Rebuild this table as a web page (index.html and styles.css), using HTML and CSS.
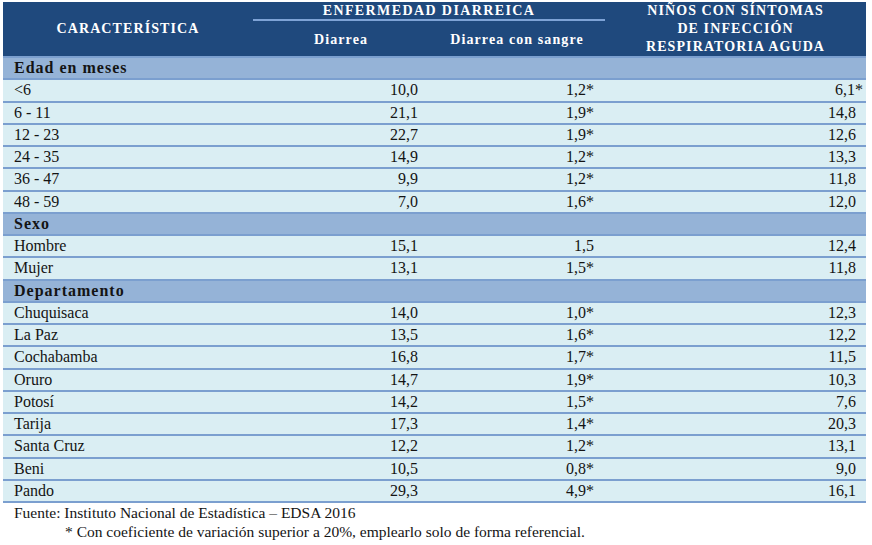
FILE: index.html
```html
<!DOCTYPE html>
<html lang="es">
<head>
<meta charset="utf-8">
<title>Tabla</title>
<link rel="stylesheet" href="styles.css">
</head>
<body>
<div class="page">
  <table class="data">
    <colgroup>
      <col class="c1"><col class="c2"><col class="c3"><col class="c4">
    </colgroup>
    <thead>
      <tr class="h1">
        <th rowspan="2" class="hc">CARACTERÍSTICA</th>
        <th colspan="2" class="hgroup">ENFERMEDAD DIARREICA</th>
        <th rowspan="2" class="hc hninos">NIÑOS CON SÍNTOMAS<br>DE INFECCIÓN<br>RESPIRATORIA AGUDA</th>
      </tr>
      <tr class="h2">
        <th class="hsub">Diarrea</th>
        <th class="hsub">Diarrea con sangre</th>
      </tr>
    </thead>
    <tbody>
      <tr class="sec"><td>Edad en meses</td><td></td><td></td><td></td></tr>
      <tr><td>&lt;6</td><td>10,0</td><td>1,2*</td><td>6,1<span class="out">*</span></td></tr>
      <tr><td>6 - 11</td><td>21,1</td><td>1,9*</td><td>14,8</td></tr>
      <tr><td>12 - 23</td><td>22,7</td><td>1,9*</td><td>12,6</td></tr>
      <tr><td>24 - 35</td><td>14,9</td><td>1,2*</td><td>13,3</td></tr>
      <tr><td>36 - 47</td><td>9,9</td><td>1,2*</td><td>11,8</td></tr>
      <tr><td>48 - 59</td><td>7,0</td><td>1,6*</td><td>12,0</td></tr>
      <tr class="sec"><td>Sexo</td><td></td><td></td><td></td></tr>
      <tr><td>Hombre</td><td>15,1</td><td>1,5</td><td>12,4</td></tr>
      <tr><td>Mujer</td><td>13,1</td><td>1,5*</td><td>11,8</td></tr>
      <tr class="sec"><td>Departamento</td><td></td><td></td><td></td></tr>
      <tr><td>Chuquisaca</td><td>14,0</td><td>1,0*</td><td>12,3</td></tr>
      <tr><td>La Paz</td><td>13,5</td><td>1,6*</td><td>12,2</td></tr>
      <tr><td>Cochabamba</td><td>16,8</td><td>1,7*</td><td>11,5</td></tr>
      <tr><td>Oruro</td><td>14,7</td><td>1,9*</td><td>10,3</td></tr>
      <tr><td>Potosí</td><td>14,2</td><td>1,5*</td><td>7,6</td></tr>
      <tr><td>Tarija</td><td>17,3</td><td>1,4*</td><td>20,3</td></tr>
      <tr><td>Santa Cruz</td><td>12,2</td><td>1,2*</td><td>13,1</td></tr>
      <tr><td>Beni</td><td>10,5</td><td>0,8*</td><td>9,0</td></tr>
      <tr class="last"><td>Pando</td><td>29,3</td><td>4,9*</td><td>16,1</td></tr>
    </tbody>
  </table>
  <p class="source">Fuente: Instituto Nacional de Estadística – EDSA 2016</p>
  <p class="note">* Con coeficiente de variación superior a 20%, emplearlo solo de forma referencial.</p>
</div>
</body>
</html>
```

FILE: styles.css
```css
html, body {
  margin: 0;
  padding: 0;
  background: #ffffff;
}

body {
  font-family: "Liberation Serif", "DejaVu Serif", "Times New Roman", Times, serif;
  color: #141414;
}

.page {
  padding: 2px 0 0 3px;
}

.data {
  width: 863px;
  table-layout: fixed;
  border-collapse: separate;
  border-spacing: 0;
}

.c1 { width: 250px; }
.c2 { width: 176px; }
.c3 { width: 176px; }
.c4 { width: 261px; }

.data th {
  background: #1f497d;
  color: #ffffff;
  font-weight: bold;
  font-size: 14px;
  letter-spacing: 1.1px;
  text-align: center;
  padding: 0;
}

.h1 th.hgroup {
  height: 17px;
  line-height: 17px;
  vertical-align: middle;
  border-bottom: 2px solid #7ea3d6;
  letter-spacing: 1.4px;
}

.hc {
  vertical-align: middle;
}

.hninos {
  line-height: 18px;
  padding-top: 1px;
  letter-spacing: 1.3px;
}

.h2 th.hsub {
  height: 34px;
  vertical-align: middle;
  padding-top: 3px;
  box-sizing: border-box;
}

.data td {
  font-size: 16px;
  height: 20.25px;
  line-height: 18px;
  padding: 0 11px 0 0;
  border-top: 2px solid #7b9fcf;
  background: #daeef3;
  text-align: right;
  vertical-align: middle;
  white-space: nowrap;
}

.data td:first-child {
  text-align: left;
  padding: 0 0 0 11px;
}

.data td:last-child {
  padding-right: 10px;
}

.data tr.sec td {
  background: #95b3d7;
  font-weight: bold;
  letter-spacing: 1px;
}

.data tr.last td {
  border-bottom: 2px solid #7b9fcf;
}

.out {
  margin-right: -7px;
}

.source {
  margin: 0;
  padding: 1px 0 0 11px;
  font-size: 15.5px;
  line-height: 18px;
}

.note {
  margin: 0;
  padding: 1px 0 0 62px;
  font-size: 15.5px;
  line-height: 18px;
}
```
